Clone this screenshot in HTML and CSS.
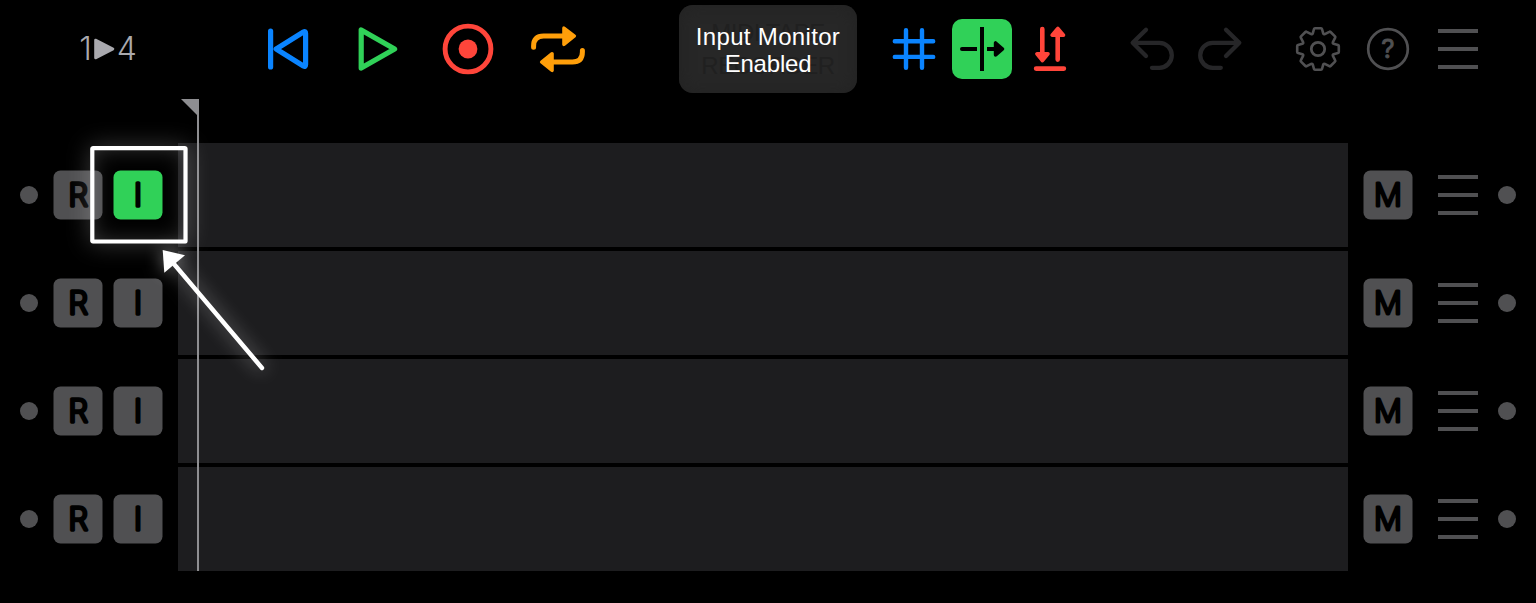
FILE: index.html
```
<!DOCTYPE html>
<html lang="en">
<head>
<meta charset="utf-8">
<title>MIDI Tape Recorder</title>
<link rel="stylesheet" href="styles.css">
</head>
<body>
<div class="app">
  <header class="toolbar">
    <div class="position"><span>1</span><svg width="21" height="22" viewBox="0 0 21 22"><path d="M1.5 2 L19 11 L1.5 20Z" fill="currentColor" stroke="currentColor" stroke-width="2.6" stroke-linejoin="round"/></svg><span>4</span></div>

    <div class="group transport">
      <svg class="icon blue" viewBox="0 0 60 60"><path d="M12.6 12V48M18.2 30L45.4 13Q47.6 11.8 47.6 14.4V45.6Q47.6 48.2 45.4 47Z" stroke-width="5.2"/></svg>
      <svg class="icon green" viewBox="0 0 60 60"><path d="M13.2 10.9V49.1L46.6 30Z" stroke-width="5.2"/></svg>
      <svg class="icon red" viewBox="0 0 60 60"><circle cx="30" cy="30" r="22.9" stroke-width="4.9"/><circle class="solid" cx="30" cy="30" r="9.4" stroke="none"/></svg>
      <svg class="icon orange" viewBox="0 0 60 60"><path d="M5.6 28.2V27Q5.6 17 15.6 17H36M54.4 31.4V33Q54.4 43 44.4 43H24" stroke-width="5"/><path class="solid" d="M35.9 9L46.4 17L35.9 25.4ZM24.1 34.6L13.6 43L24.1 51.4Z" stroke-width="3.4"/></svg>
    </div>

    <div class="toast">
      <div class="app-name">MIDI TAPE<br>RECORDER</div>
      <div class="message"><span class="wide">Input Monitor</span><br><span class="tight">Enabled</span></div>
    </div>

    <div class="group tools">
      <svg class="icon blue" viewBox="0 0 60 60"><path d="M22 11.2V48.8M38 11.2V48.8M10.8 22.2H49.2M10.8 37.9H49.2" stroke-width="4.4"/></svg>
      <svg class="icon active" viewBox="0 0 60 60"><path d="M10 30H23" stroke-width="4"/><path d="M21 30H25M35 30H44M30 8V52" stroke-width="4" stroke-linecap="butt"/><path class="solid" d="M43.6 24V36L50.5 30Z" stroke-width="3.6"/></svg>
      <svg class="icon red" viewBox="0 0 60 60"><path d="M22.3 10V36M37.7 16V40.6M16.1 49.6H43.9" stroke-width="4.6"/><path class="solid" d="M16.9 34.8H28L22.4 41.6ZM32.1 16.2H43.5L37.8 9.5Z" stroke-width="3.6"/></svg>
    </div>

    <div class="group history">
      <svg class="icon dim" viewBox="0 0 60 60"><path d="M24 10.7L10.7 23.8L24 37M11 23.8H37.3A12.45 12.45 0 0 1 37.3 48.8H30" stroke-width="4.3"/></svg>
      <svg class="icon dim" viewBox="0 0 60 60"><path d="M36 10.7L49.3 23.8L36 37M49 23.8H22.7A12.45 12.45 0 0 0 22.7 48.8H30.8" stroke-width="4.3"/></svg>
    </div>

    <div class="group options">
      <svg class="icon gray" viewBox="-30 -30 60 60"><circle r="6.7" stroke-width="2.8"/><path stroke-width="2.6" d="M-3 -20.8H3Q3.8 -20.8 4 -20L5.2 -15.6Q5.6 -14.4 6.8 -14.9L11.3 -17.2Q12 -17.6 12.6 -17L17 -12.6Q17.6 -12 17.2 -11.3L14.9 -6.8Q14.4 -5.6 15.6 -5.2L20 -4Q20.8 -3.8 20.8 -3V3Q20.8 3.8 20 4L15.6 5.2Q14.4 5.6 14.9 6.8L17.2 11.3Q17.6 12 17 12.6L12.6 17Q12 17.6 11.3 17.2L6.8 14.9Q5.6 14.4 5.2 15.6L4 20Q3.8 20.8 3 20.8H-3Q-3.8 20.8 -4 20L-5.2 15.6Q-5.6 14.4 -6.8 14.9L-11.3 17.2Q-12 17.6 -12.6 17L-17 12.6Q-17.6 12 -17.2 11.3L-14.9 6.8Q-14.4 5.6 -15.6 5.2L-20 4Q-20.8 3.8 -20.8 3V-3Q-20.8 -3.8 -20 -4L-15.6 -5.2Q-14.4 -5.6 -14.9 -6.8L-17.2 -11.3Q-17.6 -12 -17 -12.6L-12.6 -17Q-12 -17.6 -11.3 -17.2L-6.8 -14.9Q-5.6 -14.4 -5.2 -15.6L-4 -20Q-3.8 -20.8 -3 -20.8Z"/></svg>
      <svg class="icon gray" viewBox="0 0 60 60"><circle cx="30" cy="30" r="19.8" stroke-width="2.7"/><text class="help" x="30" y="39.4" text-anchor="middle">?</text></svg>
      <div class="menu-cell"><div class="menu"><i></i><i></i><i></i></div></div>
    </div>
  </header>

  <main class="tracks">
    <section class="track">
      <div class="inputs"><span class="dot"></span><svg class="key" viewBox="0 0 50 50"><rect x=".5" y=".5" width="49" height="49" rx="7"/><text x="25.2" y="36.2">R</text></svg><svg class="key on" viewBox="0 0 50 50"><rect x=".5" y=".5" width="49" height="49" rx="7"/><text x="25" y="36.2">I</text></svg></div>
      <div class="lane"></div>
      <div class="outputs"><svg class="key" viewBox="0 0 50 50"><rect x=".5" y=".5" width="49" height="49" rx="7"/><text class="m" x="25" y="36.2">M</text></svg><div class="menu"><i></i><i></i><i></i></div><span class="dot"></span></div>
    </section>
    <section class="track">
      <div class="inputs"><span class="dot"></span><svg class="key" viewBox="0 0 50 50"><rect x=".5" y=".5" width="49" height="49" rx="7"/><text x="25.2" y="36.2">R</text></svg><svg class="key" viewBox="0 0 50 50"><rect x=".5" y=".5" width="49" height="49" rx="7"/><text x="25" y="36.2">I</text></svg></div>
      <div class="lane"></div>
      <div class="outputs"><svg class="key" viewBox="0 0 50 50"><rect x=".5" y=".5" width="49" height="49" rx="7"/><text class="m" x="25" y="36.2">M</text></svg><div class="menu"><i></i><i></i><i></i></div><span class="dot"></span></div>
    </section>
    <section class="track">
      <div class="inputs"><span class="dot"></span><svg class="key" viewBox="0 0 50 50"><rect x=".5" y=".5" width="49" height="49" rx="7"/><text x="25.2" y="36.2">R</text></svg><svg class="key" viewBox="0 0 50 50"><rect x=".5" y=".5" width="49" height="49" rx="7"/><text x="25" y="36.2">I</text></svg></div>
      <div class="lane"></div>
      <div class="outputs"><svg class="key" viewBox="0 0 50 50"><rect x=".5" y=".5" width="49" height="49" rx="7"/><text class="m" x="25" y="36.2">M</text></svg><div class="menu"><i></i><i></i><i></i></div><span class="dot"></span></div>
    </section>
    <section class="track">
      <div class="inputs"><span class="dot"></span><svg class="key" viewBox="0 0 50 50"><rect x=".5" y=".5" width="49" height="49" rx="7"/><text x="25.2" y="36.2">R</text></svg><svg class="key" viewBox="0 0 50 50"><rect x=".5" y=".5" width="49" height="49" rx="7"/><text x="25" y="36.2">I</text></svg></div>
      <div class="lane"></div>
      <div class="outputs"><svg class="key" viewBox="0 0 50 50"><rect x=".5" y=".5" width="49" height="49" rx="7"/><text class="m" x="25" y="36.2">M</text></svg><div class="menu"><i></i><i></i><i></i></div><span class="dot"></span></div>
    </section>
  </main>

  <svg class="playhead" width="18" height="472" viewBox="0 0 18 472"><path d="M0 0H18V472H16V16Z"/></svg>
  <svg class="highlight" width="98" height="98" viewBox="0 0 98 98"><rect x="2.3" y="2.1" width="93.2" height="93.4" rx=".6"/></svg>
  <svg class="pointer" width="150" height="160" viewBox="140 230 150 160"><path d="M174 264L262 368" stroke="#fff" stroke-width="4.4" stroke-linecap="round"/><path d="M162.7 250L185 255.2L164.3 272.8Z" fill="#fff"/></svg>
</div>
</body>
</html>
```

FILE: styles.css
```
* { box-sizing: border-box; }
body { margin: 0; background: #000; }
.app {
  position: relative;
  width: 1536px;
  height: 603px;
  overflow: hidden;
  background: #000;
  font-family: "Liberation Sans", Arial, sans-serif;
}
.toolbar { display: flex; align-items: center; height: 98px; padding-left: 48px; }
.position {
  display: flex;
  align-items: center;
  justify-content: center;
  gap: 2px;
  width: 120px;
  color: #a9a9ae;
  font: 350 32px/40px Inter, sans-serif;
}
.group { display: flex; }
.transport { gap: 30px; margin-left: 90px; }
.tools { gap: 8px; margin-left: 27px; }
.history { gap: 8px; margin-left: 42px; }
.options { gap: 10px; margin-left: 38px; }

.icon {
  display: block;
  width: 60px;
  height: 60px;
  fill: none;
  stroke: currentColor;
  stroke-linecap: round;
  stroke-linejoin: round;
}
.solid { fill: currentColor; }
.blue { color: #0a84ff; }
.green { color: #30d158; }
.red { color: #ff453a; }
.orange { color: #ff9f0a; }
.dim { color: #262628; }
.gray { color: #505052; }
.active { color: #000; background: #30d158; border-radius: 10px; }
.help { font: 400 26px Inter, sans-serif; fill: currentColor; stroke: currentColor; stroke-width: .8; }

.toast {
  display: grid;
  align-items: center;
  width: 178px;
  height: 88px;
  margin-left: 91px;
  border-radius: 14px;
  background: #272727;
  box-shadow: inset 0 0 16px #222;
  font-size: 24px;
  text-align: center;
}
.app-name, .message { grid-area: 1 / 1; }
.app-name { line-height: 33px; letter-spacing: -.5px; color: #202020; }
.message { line-height: 27px; color: #fff; padding-top: 2px; }
.wide { letter-spacing: .33px; }
.tight { letter-spacing: -.2px; }

.menu-cell { display: flex; align-items: center; justify-content: center; width: 60px; }
.menu { display: flex; flex-direction: column; gap: 14px; width: 40px; }
.menu i { height: 4px; background: #505052; }

.tracks { display: flex; flex-direction: column; gap: 4px; padding-top: 45px; }
.track { display: flex; height: 104px; }
.inputs { display: flex; align-items: center; width: 178px; padding-left: 20px; gap: 10px; }
.inputs .dot { margin-right: 5px; }
.lane { width: 1170px; background: #1d1d1f; }
.outputs { display: flex; align-items: center; padding-left: 15px; }
.outputs .menu { margin: 0 20px 0 25px; }
.dot { width: 18px; height: 18px; border-radius: 50%; background: #505052; }
.key { width: 50px; height: 50px; }
.key rect { fill: #505052; }
.key.on rect { fill: #30d158; }
.key text {
  font: 200 31px Inter, sans-serif;
  text-anchor: middle;
  fill: #000;
  stroke: #000;
  stroke-width: 3.6;
  stroke-linejoin: round;
}
.key .m { stroke-width: 3.2; }

.playhead { position: absolute; left: 181px; top: 99px; fill: #8e8e91; }
.highlight {
  position: absolute;
  left: 90px;
  top: 146px;
  fill: none;
  stroke: #fff;
  stroke-width: 4.2;
  border-radius: 3px;
  box-shadow: 0 0 24px rgba(255, 255, 255, .22), inset 0 0 24px rgba(255, 255, 255, .26);
}
.pointer {
  position: absolute;
  left: 140px;
  top: 230px;
  overflow: visible;
  filter: drop-shadow(0 0 9px rgba(255, 255, 255, .5));
}
```
